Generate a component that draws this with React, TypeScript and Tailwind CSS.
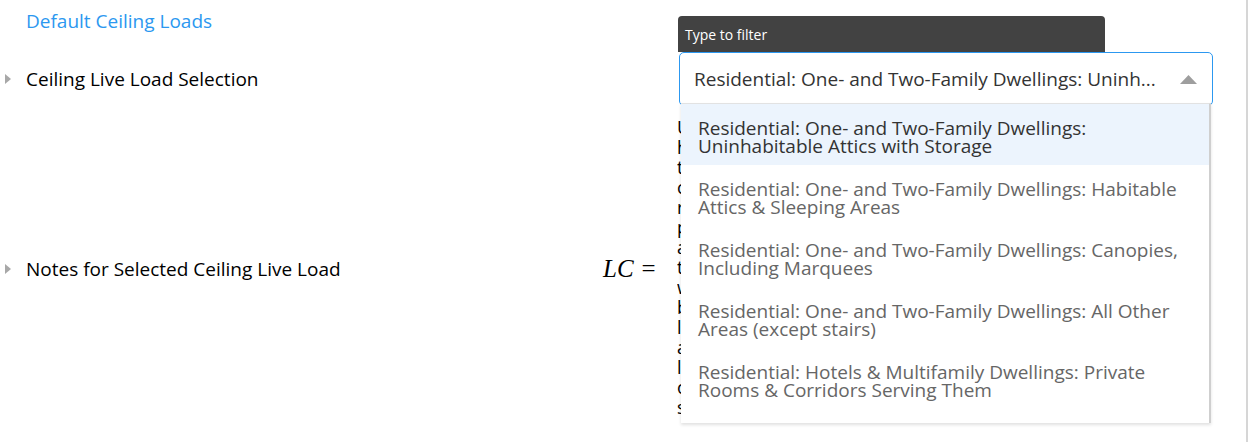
import { useState } from "react";

const options = [
  "Residential: One- and Two-Family Dwellings: Uninhabitable Attics with Storage",
  "Residential: One- and Two-Family Dwellings: Habitable Attics & Sleeping Areas",
  "Residential: One- and Two-Family Dwellings: Canopies, Including Marquees",
  "Residential: One- and Two-Family Dwellings: All Other Areas (except stairs)",
  "Residential: Hotels & Multifamily Dwellings: Private Rooms & Corridors Serving Them",
];

const notes =
  "Uninhabitable attics with storage are those where the clear height between joists and rafters is 42 in. or greater, or where there are two or more adjacent trusses with web configurations capable of accommodating an assumed rectangle 42 in. high by 24 in. wide, or greater, within the plane of the trusses. This live load need not be assumed to act concurrently with any other live load requirements, and the load applies only to those portions of the ceiling joists where the above conditions are met. Each joist or truss bottom chord shall be designed for the uniformly distributed live load over the area where the rectangle fits, and it is assumed that the remaining portions of the attic carry no live load. Ceiling framing shall also be checked for the self weight of finishes, insulation and any mechanical equipment supported from it, per section 4.3 and table 4.3-1 of the standard, as adopted by the local building code official.";

const Caret = () => (
  <svg width="8" height="10" viewBox="0 0 8 10" className="shrink-0">
    <path d="M1 0 L7 5 L1 10 Z" fill="#a8a8a8" />
  </svg>
);

export default function App() {
  const [active] = useState(0);

  return (
    <div className="flex h-[442px] w-[1250px] overflow-hidden bg-white font-['Open_Sans',sans-serif]">
      <div className="flex w-[1246px] flex-col">
        <div className="h-[42px] pl-[26px] pt-[8px] text-[19px] leading-[26px] text-[#2c98f0]">
          Default Ceiling Loads
        </div>

        <div className="grid grid-cols-[600px_1fr] items-center pt-[10px]">
          <div className="flex items-center gap-[14px] pl-[4px] text-[19px] text-black">
            <Caret />
            <span>Ceiling Live Load Selection</span>
          </div>
          <div className="relative z-10 pl-[79px]">
            <div className="absolute bottom-full left-[78px] flex h-[36px] w-[427px] items-center rounded-t-[4px] bg-[#424242] pl-[7px] text-[14px] text-white">
              Type to filter
            </div>
            <div className="flex h-[54px] w-[534px] items-center justify-between rounded-[5px] border-[1.5px] border-[#2c98f0] pl-[14px] pr-[15px] text-[19px] text-[#333]">
              <span>Residential: One- and Two-Family Dwellings: Uninh...</span>
              <svg width="17" height="9" viewBox="0 0 17 9">
                <path d="M0 9 L8.5 0 L17 9 Z" fill="#9e9e9e" />
              </svg>
            </div>
            <ul className="absolute left-[81px] top-[51px] w-[530px] border-t border-r-2 border-[#e2e2e2] border-r-[#cfcfcf] bg-white shadow-[0_2px_3px_rgba(0,0,0,0.12)]">
              {options.map((o, i) => (
                <li
                  key={o}
                  className={`px-[17px] pt-[15px] text-[19px] leading-[18px] ${
                    i === active ? "bg-[#ecf4fd] text-[#333]" : "text-[#666]"
                  } ${i === options.length - 1 ? "pb-[24px]" : "pb-[10px]"}`}
                >
                  {o}
                </li>
              ))}
            </ul>
          </div>
        </div>

        <div className="grid grid-cols-[600px_1fr] items-center pt-[11px]">
          <div className="flex items-center gap-[14px] pl-[4px] text-[19px] text-black">
            <Caret />
            <span>Notes for Selected Ceiling Live Load</span>
          </div>
          <div className="flex items-center">
            <span className="w-[77px] pl-[3px] font-['Liberation_Serif',serif] text-[25px] italic text-black">
              LC<span className="ml-[8px] not-italic">=</span>
            </span>
            <p className="h-[304px] w-[520px] overflow-hidden text-[18px] leading-[20px] text-black">
              {notes}
            </p>
          </div>
        </div>
      </div>
      <div className="w-[2px] bg-[#d6d6d6]" />
    </div>
  );
}
